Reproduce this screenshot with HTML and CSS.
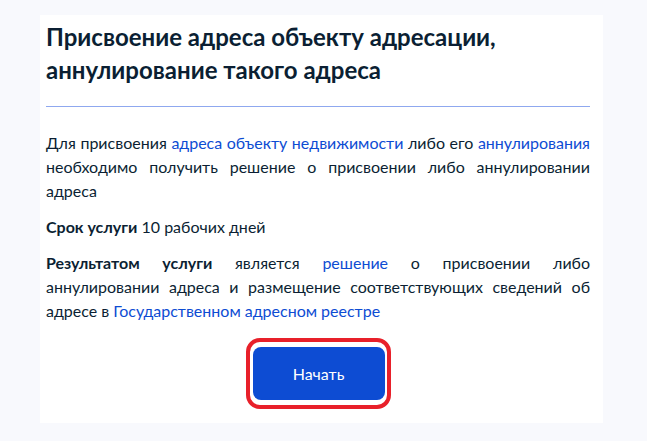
FILE: index.html
```html
<!DOCTYPE html>
<html lang="ru">
<head>
<meta charset="utf-8">
<link rel="stylesheet" href="styles.css">
</head>
<body>
<main class="card">
  <h1 class="title">Присвоение адреса объекту адресации, аннулирование такого адреса</h1>
  <hr class="divider">
  <p class="text">Для присвоения <a class="link" href="#">адреса объекту недвижимости</a> либо его <a class="link" href="#">аннулирования</a> необходимо получить решение о присвоении либо аннулировании адреса</p>
  <p class="text"><b class="strong">Срок услуги</b> 10 рабочих дней</p>
  <p class="text"><b class="strong">Результатом услуги</b> является <a class="link" href="#">решение</a> о присвоении либо аннулировании адреса и размещение соответствующих сведений об адресе в <a class="link" href="#">Государственном адресном реестре</a></p>
  <div class="actions">
    <span class="highlight"><button class="btn" type="button">Начать</button></span>
  </div>
</main>
</body>
</html>
```

FILE: styles.css
```css
html, body {
  margin: 0;
  padding: 0;
}
body {
  background: #f8f9fd;
  font-family: Lato, "Noto Sans", sans-serif;
  color: #0b1f33;
  padding-top: 15px;
}
.card {
  box-sizing: border-box;
  margin-left: 40px;
  width: 563px;
  height: 408px;
  background: #ffffff;
  padding: 5px 13px 0 6px;
}
.title {
  margin: 0;
  font-size: 24px;
  line-height: 33px;
  font-weight: 700;
  color: #0b1f33;
}
.divider {
  margin: 20px 0 0;
  border: 0;
  height: 1px;
  background: #8fa8ef;
}
.text {
  margin: 12px 0 0;
  font-size: 16px;
  line-height: 24px;
  text-align: justify;
}
.divider + .text {
  margin-top: 24px;
}
.strong {
  font-weight: 700;
}
.link {
  color: #0d4cd3;
  text-decoration: none;
}
.actions {
  display: flex;
  justify-content: center;
  margin-top: 15px;
}
.highlight {
  display: inline-flex;
  border: 4px solid #e8202a;
  border-radius: 14px;
  padding: 5px 2px 5px 3px;
}
.btn {
  width: 132px;
  height: 53px;
  border: 0;
  border-radius: 8px;
  background: #0d4cd3;
  color: #ffffff;
  font-family: Lato, "Noto Sans", sans-serif;
  font-size: 16px;
  font-weight: 400;
  cursor: pointer;
}
```
